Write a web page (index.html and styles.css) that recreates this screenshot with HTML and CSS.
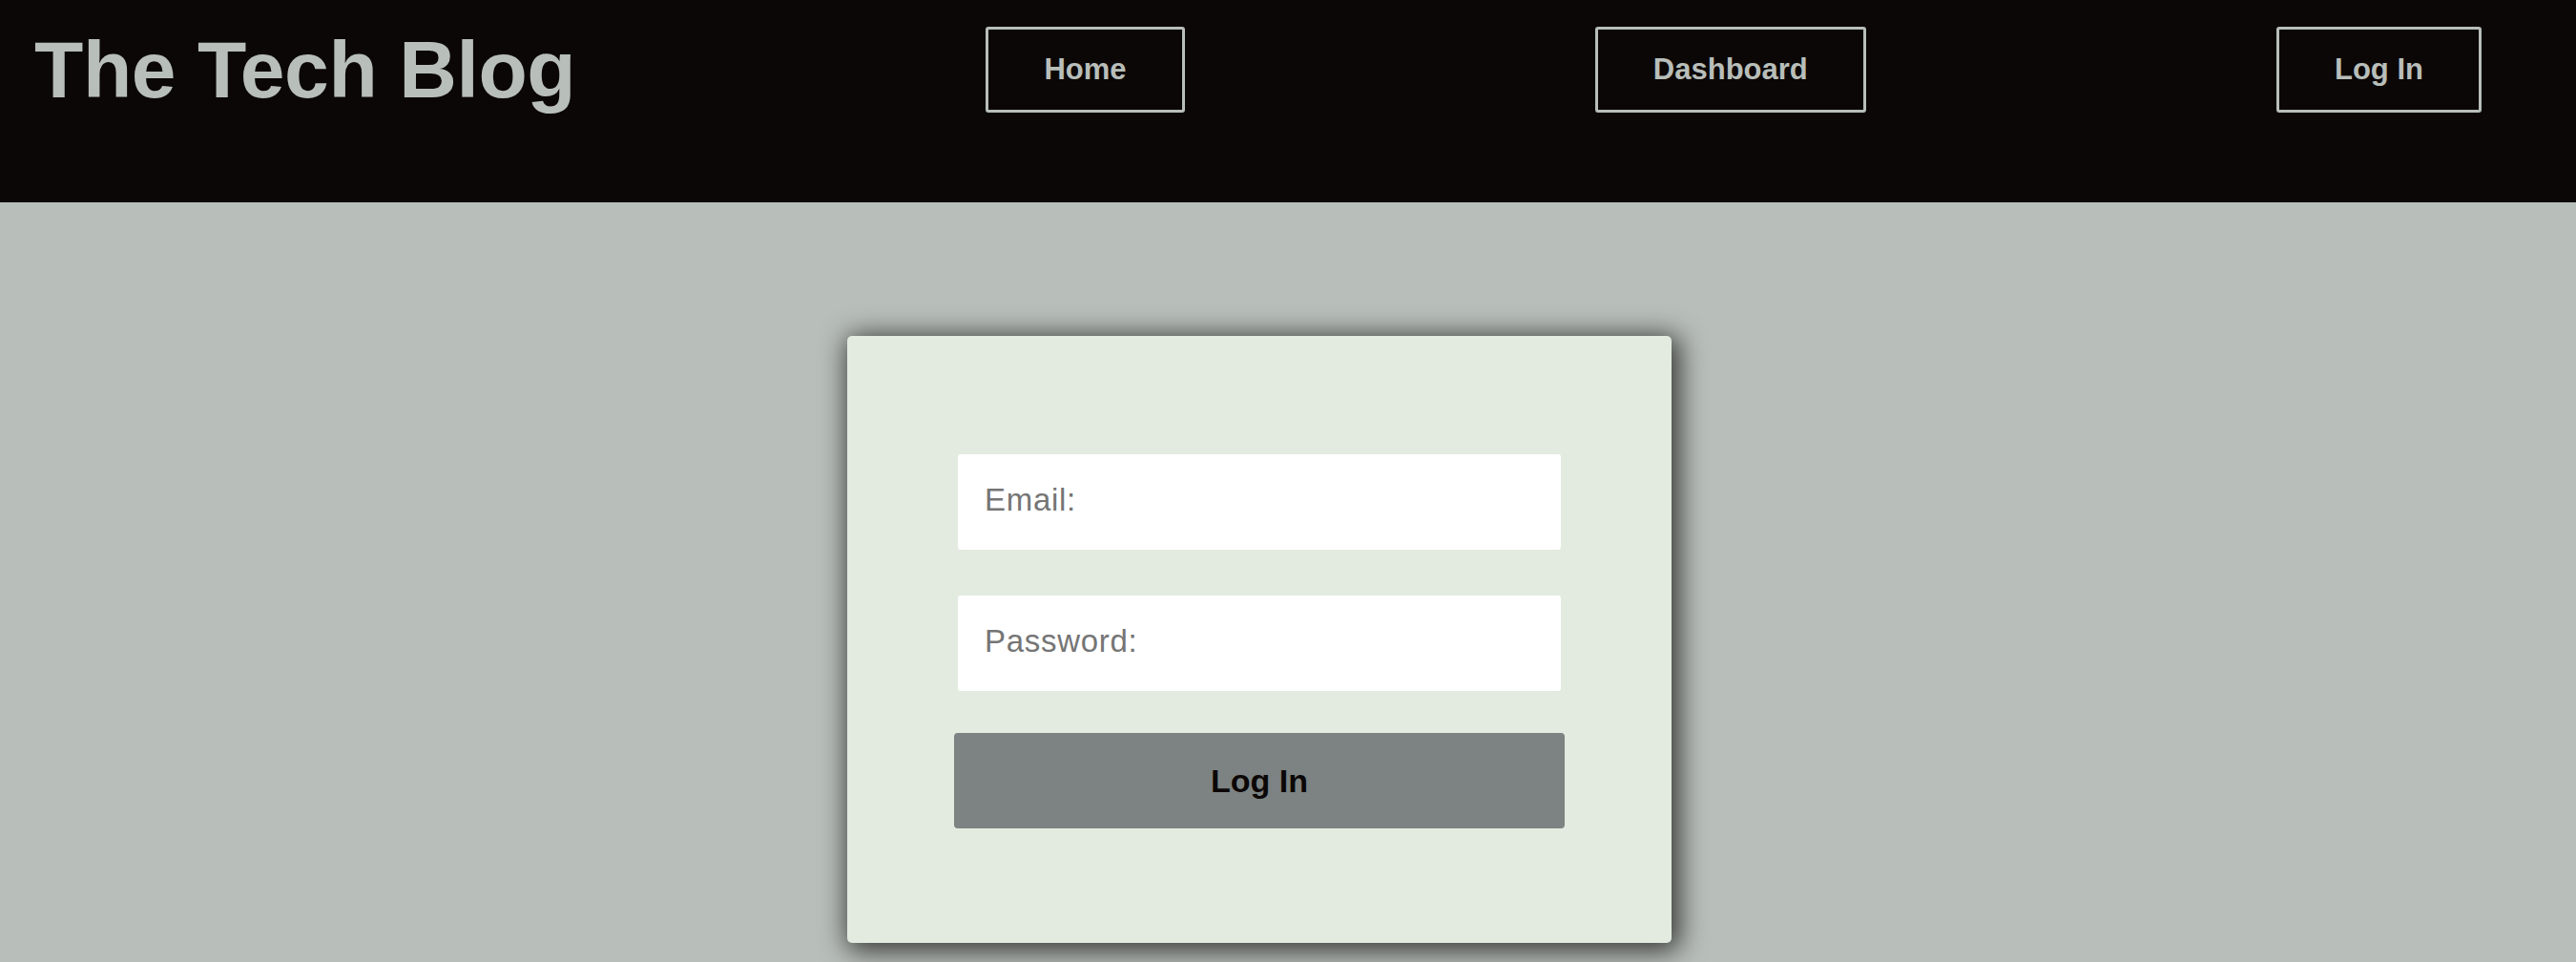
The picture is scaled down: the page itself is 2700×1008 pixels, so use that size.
FILE: index.html
```html
<!DOCTYPE html>
<html lang="en">
<head>
<meta charset="utf-8">
<title>The Tech Blog</title>
<link rel="stylesheet" href="styles.css">
</head>
<body>
<header class="site-header">
  <h1 class="brand">The Tech Blog</h1>
  <a class="nav-btn" href="#">Home</a>
  <a class="nav-btn" href="#">Dashboard</a>
  <a class="nav-btn" href="#">Log In</a>
</header>
<main class="page">
  <section class="login-card">
    <form class="login-form">
      <input class="field" type="email" placeholder="Email:">
      <input class="field field-second" type="password" placeholder="Password:">
      <button class="submit" type="button">Log In</button>
    </form>
  </section>
</main>
</body>
</html>
```

FILE: styles.css
```css
* { box-sizing: border-box; }

html, body {
  margin: 0;
  padding: 0;
}

body {
  background: #b8beb9;
  font-family: "Liberation Sans", Arial, Helvetica, sans-serif;
  min-height: 1008px;
}

.site-header {
  display: flex;
  justify-content: space-between;
  align-items: flex-start;
  height: 212px;
  padding: 0 99px 0 36px;
  background: #0b0706;
}

.brand {
  margin: 31px 0 0;
  font-size: 84px;
  line-height: 84px;
  font-weight: 700;
  letter-spacing: -0.4px;
  color: #b8beb9;
}

.nav-btn {
  display: flex;
  align-items: center;
  justify-content: center;
  margin-top: 28px;
  height: 90px;
  padding: 0 58px;
  border: 3px solid #b8beb9;
  border-radius: 3px;
  color: #b8beb9;
  font-size: 31px;
  font-weight: 700;
  text-decoration: none;
  white-space: nowrap;
}

.page {
  display: flex;
  justify-content: center;
  padding: 140px 60px 0 0;
}

.login-card {
  width: 864px;
  padding: 124px 112px 120px;
  background: #e3ebe1;
  border-radius: 5px;
  box-shadow: 4px 4px 28px 4px rgba(0, 0, 0, 0.72);
}

.login-form {
  display: flex;
  flex-direction: column;
}

.field {
  display: block;
  width: 632px;
  height: 100px;
  margin: 0 4px;
  padding: 0 26px 4px 28px;
  border: none;
  border-radius: 3px;
  background: #ffffff;
  font-family: "Liberation Sans", Arial, Helvetica, sans-serif;
  font-size: 33px;
  letter-spacing: 0.7px;
  color: #222;
  outline: none;
}

.field::placeholder {
  color: #757575;
  opacity: 1;
}

.field-second {
  margin-top: 48px;
}

.submit {
  margin-top: 44px;
  width: 640px;
  height: 100px;
  border: none;
  border-radius: 4px;
  background: #7c8382;
  color: #0b0706;
  font-family: "Liberation Sans", Arial, Helvetica, sans-serif;
  font-size: 34px;
  font-weight: 700;
  cursor: pointer;
}
```
